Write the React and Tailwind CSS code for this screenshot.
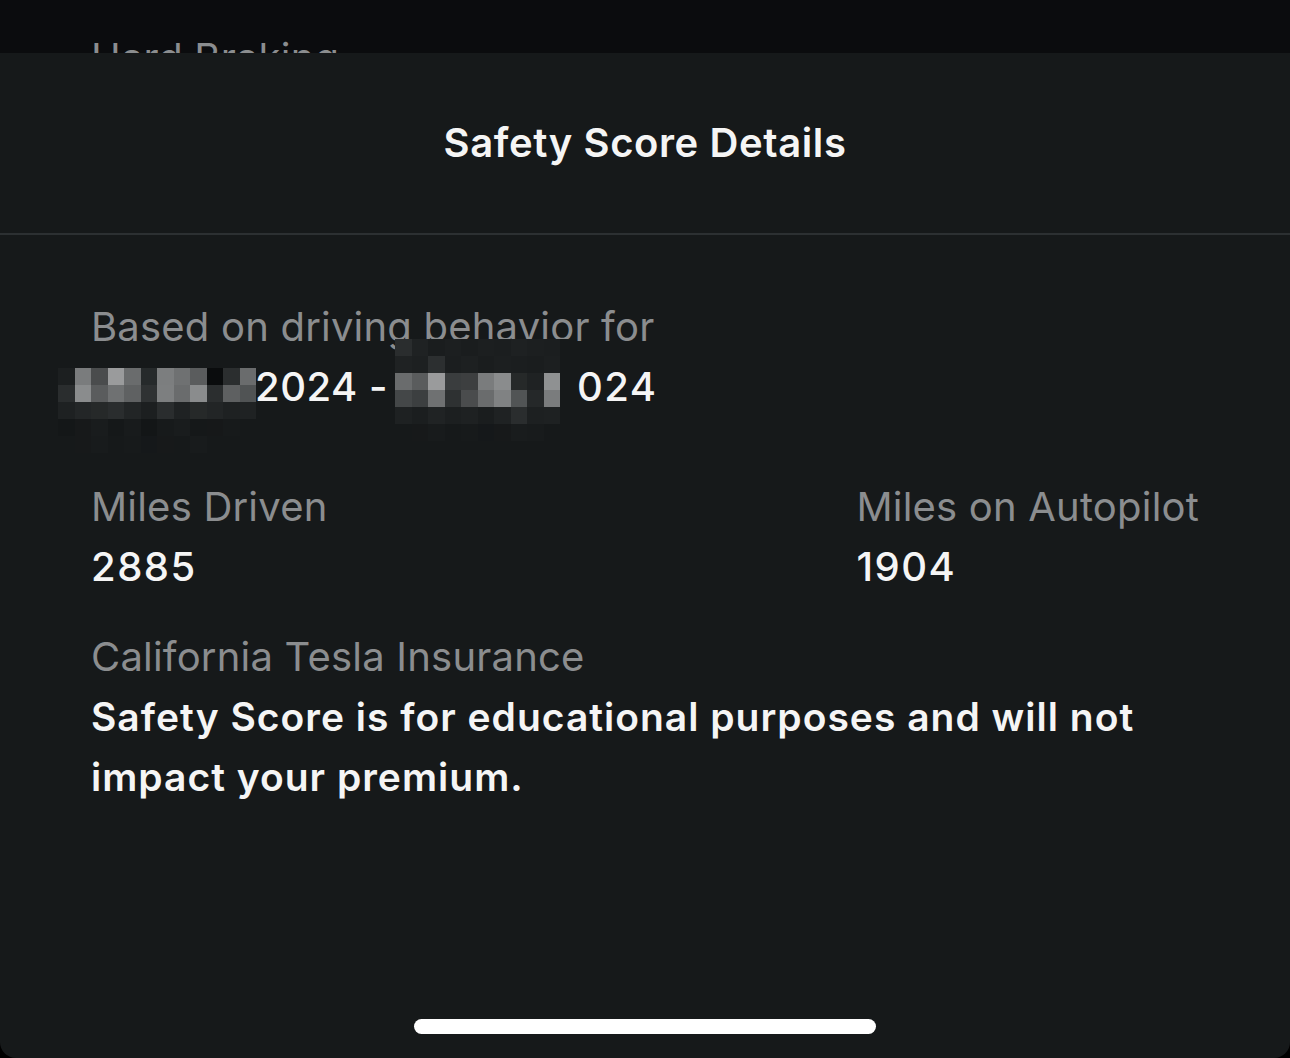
import React from "react";

const font = { fontFamily: "Inter, 'Noto Sans', sans-serif" };

// pixelated cells covering the dates
const mosaicA = [
  ["#1c1f20", "#7a7c7d", "#4a4c4d", "#9a9b9c", "#6a6c6d", "#262a2b", "#7c7e7f", "#6f7172", "#5a5c5d", "#0a0c0d", "#2b2e2f", "#6a6c6d"],
  ["#2a2d2e", "#8a8c8d", "#5a5c5d", "#6f7172", "#5f6162", "#2f3233", "#7d7f80", "#6a6c6d", "#8a8c8d", "#2b2e2f", "#5e6061", "#505354"],
  ["#1e2122", "#232627", "#262929", "#2a2d2e", "#222526", "#1c1f20", "#2a2d2e", "#1f2223", "#262929", "#222526", "#1e2122", "#1f2223"],
  ["#141718", "#17191a", "#191c1d", "#151819", "#181b1c", "#131617", "#171a1b", "#191c1d", "#151819", "#161819", "#171a1b", "#16191a"],
  ["#16191a", "#17191a", "#181b1c", "#16191a", "#171a1b", "#15181a", "#17191a", "#16191a", "#181b1c", "#16191a", "#16191a", "#16191a"],
];

const mosaicB = [
  ["#2a2d2e", "#1f2223", "#1a1d1e", "#1c1f20", "#1a1d1e", "#1c1f20", "#1b1e1f", "#1e2122", "#1c1f20", "#1b1e1f", "#16191a"],
  ["#1f2223", "#1d2021", "#2c2f30", "#1b1e1f", "#1d2021", "#1a1d1e", "#1c1f20", "#1b1e1f", "#1a1d1e", "#1c1f20", "#16191a"],
  ["#6a6c6d", "#5a5c5d", "#9a9b9c", "#3a3d3e", "#3d3f40", "#7a7c7d", "#8a8c8d", "#262929", "#1f2223", "#8f9192", "#16191a"],
  ["#444748", "#3c3f40", "#6f7172", "#2e3132", "#4a4c4d", "#6a6c6d", "#808283", "#515455", "#252829", "#7a7c7d", "#16191a"],
  ["#1e2122", "#1b1e1f", "#202324", "#1c1f20", "#1e2122", "#1a1d1e", "#1f2223", "#2a2d2e", "#1d2021", "#1e2122", "#16191a"],
  ["#16191a", "#17191a", "#181b1c", "#16191a", "#171a1b", "#15181a", "#17191a", "#191c1d", "#181b1c", "#16191a", "#16191a"],
];

const Mosaic = ({ cells, className }) => (
  <div className={`absolute grid ${className}`}>
    {cells.flat().map((c, i) => (
      <div key={i} className="h-[17px]" style={{ background: c }} />
    ))}
  </div>
);

const Label = ({ children }) => (
  <div className="text-[40px] leading-[60px] tracking-[0.2px] text-[#8b8d8f]">{children}</div>
);

const Value = ({ children }) => (
  <div className="text-[40px] leading-[60px] tracking-[1.5px] font-medium text-[#f5f5f5]">{children}</div>
);

export default function App() {
  return (
    <div className="w-[1290px] h-[1058px] bg-black flex flex-col overflow-hidden" style={font}>
      {/* screen behind the sheet */}
      <div className="h-[53px] shrink-0 bg-[#0b0c0e] overflow-hidden pl-[91px] pt-[28px]">
        <Label>Hard Braking</Label>
      </div>

      {/* Sheet */}
      <div className="flex-1 bg-[#16191a] rounded-b-[16px] flex flex-col">
        <div className="h-[182px] flex items-center justify-center border-b-2 border-[#2c3032]">
          <h1 className="text-[40px] font-semibold text-[#f5f5f5] tracking-[0.6px]">Safety Score Details</h1>
        </div>

        <div className="flex-1 px-[91px] pt-[62px] flex flex-col">
          <div className="relative">
            <Label>Based on driving behavior for</Label>
            <div className="text-[40px] leading-[60px] tracking-[1.5px] font-medium text-[#f5f5f5] whitespace-nowrap">
              <span className="inline-block w-[164px]" />
              <span className="inline-block w-[322px] tracking-[0.5px]">2024 -</span>
              024
            </div>
            <Mosaic cells={mosaicA} className="left-[-33px] top-[71px] grid-cols-[repeat(12,16.5px)]" />
            <Mosaic cells={mosaicB} className="left-[304px] top-[42px] grid-cols-[repeat(11,16.5px)]" />
          </div>

          <div className="flex justify-between mt-[60px]">
            <div>
              <Label>Miles Driven</Label>
              <Value>2885</Value>
            </div>
            <div>
              <Label>Miles on Autopilot</Label>
              <Value>1904</Value>
            </div>
          </div>

          <div className="mt-[30px]">
            <Label>California Tesla Insurance</Label>
            <div className="text-[39px] leading-[60px] tracking-[1px] font-semibold text-[#f5f5f5]">
              Safety Score is for educational purposes and will not
              <br />
              impact your premium.
            </div>
          </div>

          <div className="mt-auto pb-[24px] flex justify-center">
            <div className="w-[462px] h-[15px] rounded-full bg-white" />
          </div>
        </div>
      </div>
    </div>
  );
}
